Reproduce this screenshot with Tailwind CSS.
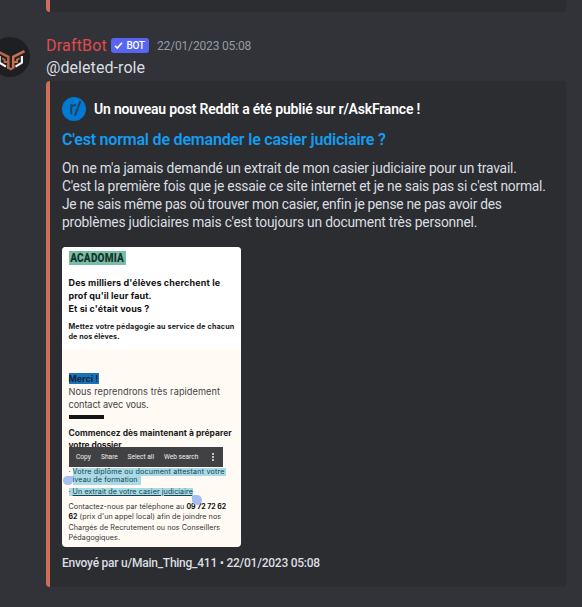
<!DOCTYPE html>
<html lang="fr">
<head>
<meta charset="utf-8">
<title>DraftBot</title>
<script src="https://cdn.jsdelivr.net/npm/@tailwindcss/browser@4"></script>
</head>
<body class="w-[582px] h-[607px] overflow-hidden bg-[#313338] font-[Roboto,'Noto_Sans',sans-serif] text-[#dbdee1]">
<!-- End of the previous embed -->
<div class="ml-[46px] w-[520px] h-3 bg-[#2b2d31] border-l-4 border-[#cc6f58] rounded-b-[4px]"></div>

<article class="mt-[25px] flex">
  <div class="w-[46px] h-[44px] shrink-0 overflow-hidden">
    <svg class="-ml-[10px] w-10 h-10 block" viewBox="0 0 40 40">
      <circle cx="20" cy="20" r="20" fill="#1e1f22"/>
      <g fill="none" stroke-width="2.5">
        <path d="M7 14.2 18.3 19.8V32" stroke="#b9654a"/>
        <path d="M34.5 14.2 23.2 19.8V31.5" stroke="#c8704f"/>
        <path d="M12 21.2 14.6 22.8V25H18" stroke="#b9654a" stroke-width="1.9"/>
        <path d="M29.5 21.2 27 22.8V25H23" stroke="#c8704f" stroke-width="1.9"/>
        <path d="M9.6 19V25.6L16 29.6M31.9 19V25.6L25.5 29.6" stroke="#f4f4f4" stroke-width="2.2"/>
      </g>
      <path d="M17.1 29 20.7 31 24.4 29V31.2L20.7 33.4 17.1 31.2Z" fill="#b9654a"/>
    </svg>
  </div>
  <div class="w-[520px]">
    <header class="flex h-[18px] items-center">
      <span class="-mt-px text-[16px] leading-[18px] tracking-[0.2px] text-[#e04a4f]">DraftBot</span>
      <span class="-mt-[2px] ml-1 flex h-[15px] w-[38px] items-center rounded-[3px] bg-[#5865f2] text-white">
        <svg class="ml-[3px] w-[9px] h-[9px]" viewBox="0 0 9 9" fill="none" stroke="currentColor" stroke-width="1.6"><path d="M1 4.8 3.3 7 8 1.8"/></svg>
        <span class="ml-[3.5px] text-[10px] leading-[15px] font-medium tracking-[-0.4px]">BOT</span>
      </span>
      <time class="ml-2 pt-[1px] text-[12px] leading-[17px] tracking-[-0.17px] text-[#949ba4]">22/01/2023 05:08</time>
    </header>
    <p class="h-[26px] text-[16px] leading-[25px] tracking-[0.07px]">@deleted-role</p>

    <section class="h-[506px] rounded-[4px] border-l-4 border-[#cc6f58] bg-[#2b2d31] pl-3 pt-4 whitespace-nowrap">
      <div class="flex h-6 items-center">
        <svg class="w-6 h-6" viewBox="0 0 24 24">
          <circle cx="12" cy="12" r="12" fill="#0079d3"/>
          <path d="M9.2 17.2V7M9.2 11Q9.4 7.8 14 8.2M12.9 18.8 18.4 4.2" fill="none" stroke="#263f59" stroke-width="1.9"/>
        </svg>
        <span class="ml-2 text-[14px] font-semibold tracking-[-0.19px] text-white">Un nouveau post Reddit a été publié sur r/AskFrance !</span>
      </div>
      <h2 class="mt-[8px] h-[22px] text-[16px] leading-[22px] font-semibold tracking-[-0.2px] text-[#149cf0]">C'est normal de demander le casier judiciaire ?</h2>
      <div class="mt-[8px] text-[13.8px] leading-[18px]">
        <p class="tracking-[-0.18px]">On ne m'a jamais demandé un extrait de mon casier judiciaire pour un travail.</p>
        <p class="tracking-[-0.225px]">C'est la première fois que je essaie ce site internet et je ne sais pas si c'est normal.</p>
        <p class="tracking-[-0.285px]">Je ne sais même pas où trouver mon casier, enfin je pense ne pas avoir des</p>
        <p class="tracking-[-0.195px]">problèmes judiciaires mais c'est toujours un document très personnel.</p>
      </div>

      <!-- Attached phone capture -->
      <div class="relative mt-[16px] h-[300px] w-[179px] overflow-hidden rounded-[4px] bg-[#fffaf4] font-[Inter,sans-serif] text-[#1c1c1c]">
        <div class="h-[102px] bg-white pl-[6.5px] pt-[4px]">
          <div class="flex h-[14px] w-[57px] items-center justify-center bg-[#79bda6]"><span class="inline-block scale-x-[0.84] font-[Roboto,sans-serif] text-[12px] leading-[14px] font-black tracking-[0.2px] text-[#17352f]">ACADOMIA</span></div>
          <div class="mt-[10.5px] text-[9px] leading-[13px] font-bold tracking-[0.13px] text-[#111]">
            <p>Des milliers d'élèves cherchent le</p>
            <p class="tracking-[0.08px]">prof qu'il leur faut.</p>
            <p class="tracking-[0.1px]">Et si c'était vous ?</p>
          </div>
          <div class="mt-[7px] text-[7.2px] leading-[10.5px] font-bold tracking-[0.15px]">
            <p>Mettez votre pédagogie au service de chacun</p>
            <p class="tracking-[0.05px]">de nos élèves.</p>
          </div>
        </div>
        <div class="pl-[6.5px] pt-[24px]">
          <p class="h-[11px] w-[30.5px] bg-[#1b72b4] text-[8.9px] leading-[11px] font-bold text-[#0c2741]">Merci !</p>
          <div class="mt-[1px] text-[9.2px] leading-[13px] tracking-[0.07px] text-[#444]">
            <p>Nous reprendrons très rapidement</p>
            <p class="tracking-[-0.1px]">contact avec vous.</p>
          </div>
          <div class="mt-[4px] h-[3.5px] w-[35px] bg-[#141414]"></div>
          <div class="mt-[8.5px] text-[8.48px] leading-[12px] font-bold tracking-[0.02px]">
            <p>Commencez dès maintenant à préparer</p>
            <p class="tracking-[-0.1px]">votre dossier</p>
          </div>
          <div class="mt-[16.5px] text-[7.2px] leading-[8.5px] text-[#174151]">
            <p class="flex h-[8.5px]">·&nbsp;<span class="w-[153px] bg-[#a9dbe6] tracking-[0.18px]">Votre diplôme ou document attestant votre</span></p>
            <p class="flex h-[8.5px] pl-[4px]"><span class="w-[68px] bg-[#a9dbe6] tracking-[0.1px]">iveau de formation</span></p>
            <p class="mt-[3px] flex h-[8px] w-[124.5px] bg-[#a9dbe6] leading-[8px]">·&nbsp;<span class="underline tracking-[0.06px]">Un extrait de votre casier judiciaire</span></p>
          </div>
          <div class="mt-[6.5px] text-[7.2px] leading-[10.4px] tracking-[0.06px] text-[#333]">
            <p>Contactez-nous par téléphone au <b class="text-[6.95px] tracking-[0px] text-[#111]">09 72 72 62</b></p>
            <p><b class="text-[6.95px] text-[#111]">62</b> (prix d'un appel local) afin de joindre nos</p>
            <p>Chargés de Recrutement ou nos Conseillers</p>
            <p>Pédagogiques.</p>
          </div>
        </div>
        <!-- Selection toolbar and handles -->
        <div class="absolute left-[7px] top-[200px] flex h-[20px] w-[154px] items-center bg-[#414143] pl-[7px] pt-px font-[Roboto,sans-serif] text-[6.6px] text-[#f0f0f0]">
          <span class="w-[25px]">Copy</span><span class="w-[26.5px]">Share</span><span class="w-[36.5px]">Select all</span><span>Web search</span>
          <svg class="absolute left-[142px] top-[5px] h-[10px] w-[4px]" viewBox="0 0 4 10" fill="#fff"><circle cx="2" cy="2" r=".9"/><circle cx="2" cy="5" r=".9"/><circle cx="2" cy="8" r=".9"/></svg>
        </div>
        <div class="absolute left-[1px] top-[229px] h-[9px] w-[10px] rounded-full rounded-tr-none bg-[#a5bff2]"></div>
        <div class="absolute left-[130px] top-[248px] h-[10px] w-[10px] rounded-full rounded-tl-none bg-[#a5bff2]"></div>
      </div>
      <footer class="mt-[8px] text-[12px] leading-4 font-medium tracking-[-0.24px]">Envoyé par u/Main_Thing_411 • 22/01/2023 05:08</footer>
    </section>
  </div>
</article>
</body>
</html>
